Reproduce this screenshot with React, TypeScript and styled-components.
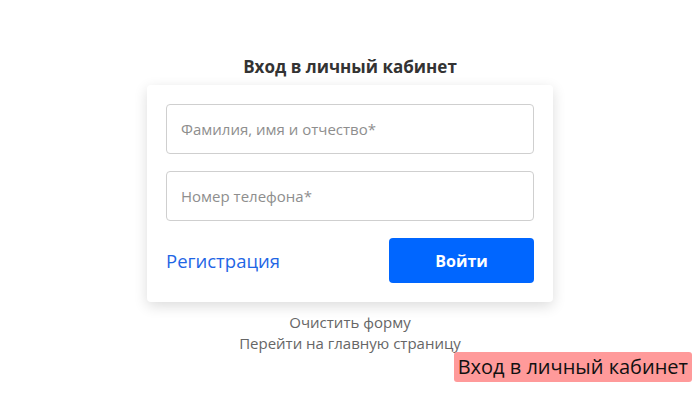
import { FC } from "react";
import styled, { createGlobalStyle } from "styled-components";

const GlobalStyle = createGlobalStyle`
  html, body {
    margin: 0;
    padding: 0;
    background: #fff;
    font-family: "Open Sans", "Liberation Sans", sans-serif;
  }
  * {
    box-sizing: border-box;
  }
`;

const Page = styled.div`
  position: relative;
  width: 700px;
  height: 400px;
  overflow: hidden;
  display: flex;
  flex-direction: column;
  align-items: center;
  padding-top: 55px;
`;

const Title = styled.h1`
  margin: 0 0 6px;
  font-size: 17px;
  line-height: 24px;
  font-weight: 700;
  color: #333;
`;

const Card = styled.form`
  width: 406px;
  padding: 19px;
  background: #fff;
  border-radius: 4px;
  box-shadow: 0 4px 14px rgba(0, 0, 0, 0.14);
  display: flex;
  flex-direction: column;
  gap: 17px;
`;

const Field = styled.input`
  width: 100%;
  height: 50px;
  padding: 0 14px;
  border: 1px solid #cfcfcf;
  border-radius: 4px;
  font-family: inherit;
  font-size: 15px;
  color: #333;
  outline: none;
  &::placeholder {
    color: #8e8e8e;
  }
`;

const Actions = styled.div`
  display: flex;
  align-items: center;
  justify-content: space-between;
`;

const RegisterLink = styled.a`
  font-size: 18.5px;
  color: #1f66e5;
  text-decoration: none;
  cursor: pointer;
`;

const SubmitButton = styled.button`
  width: 145px;
  height: 45px;
  border: none;
  border-radius: 4px;
  background: #0066ff;
  color: #fff;
  font-family: inherit;
  font-size: 16px;
  font-weight: 700;
  cursor: pointer;
`;

const Links = styled.div`
  margin-top: 10px;
  display: flex;
  flex-direction: column;
  align-items: center;
`;

const SubLink = styled.a`
  font-size: 15px;
  line-height: 21px;
  color: #666;
  text-decoration: none;
  cursor: pointer;
`;

const Badge = styled.div`
  position: absolute;
  right: 8px;
  bottom: 18px;
  height: 30px;
  padding: 0 4px;
  border-radius: 3px;
  background: #ff9a9a;
  color: #111;
  font-size: 20px;
  line-height: 30px;
`;

const App: FC = () => {
  return (
    <>
      <GlobalStyle />
      <Page>
        <Title>Вход в личный кабинет</Title>
        <Card onSubmit={(e) => e.preventDefault()}>
          <Field placeholder="Фамилия, имя и отчество*" />
          <Field placeholder="Номер телефона*" />
          <Actions>
            <RegisterLink>Регистрация</RegisterLink>
            <SubmitButton type="submit">Войти</SubmitButton>
          </Actions>
        </Card>
        <Links>
          <SubLink>Очистить форму</SubLink>
          <SubLink>Перейти на главную страницу</SubLink>
        </Links>
        <Badge>Вход в личный кабинет</Badge>
      </Page>
    </>
  );
};

export default App;
